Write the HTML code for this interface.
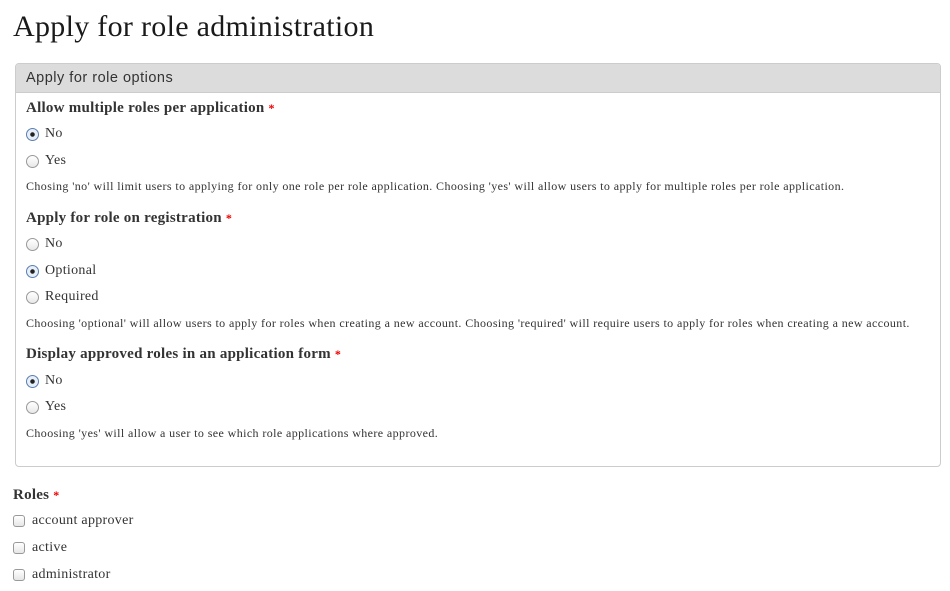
<!DOCTYPE html>
<html><head><style>
body{margin:0;width:950px;height:591px;background:#fff;font-family:"Liberation Serif",serif;color:#3b3b3b;position:relative;overflow:hidden}
.a{position:absolute;white-space:nowrap;line-height:1}
h1{position:absolute;left:13px;top:11px;margin:0;font-weight:normal;font-size:30px;letter-spacing:0.3px;color:#1a1a1a;line-height:32px}
.fs{position:absolute;left:15px;top:63px;width:924px;height:402px;border:1px solid #ccc;border-radius:4px;overflow:hidden}
.lg{position:absolute;left:0;top:0;right:0;height:28px;background:#dcdcdc;border-bottom:1px solid #ccc;font-family:"Liberation Sans",sans-serif;font-size:14.5px;letter-spacing:0.5px;color:#333;line-height:28px;padding-left:10px}
.lb{font-weight:bold;font-size:15px;letter-spacing:0.25px;color:#333}
.lb i{color:#e00;font-style:normal;font-size:12px}
.op{font-size:14px;letter-spacing:0.3px;color:#333}
.d{font-size:12px;letter-spacing:0.4px;color:#333}
.r{position:absolute;width:11px;height:11px;border:1px solid #999;border-radius:50%;background:linear-gradient(#fff,#e8e8e8)}
.r.on{border-color:#5a7fb0;background:radial-gradient(circle,#222 0 2px,#e6eef8 2.5px)}
.c{position:absolute;width:10px;height:10px;border:1px solid #999;border-radius:3px;background:linear-gradient(#fff,#e6e6e6)}
</style></head><body>
<h1>Apply for role administration</h1>
<div class="fs"><div class="lg">Apply for role options</div></div>
<div class="a lb" style="left:26px;top:101px">Allow multiple roles per application <i>*</i></div>
<div class="r on" style="left:26px;top:128px"></div><div class="a op" style="left:45px;top:127px">No</div>
<div class="r" style="left:26px;top:155px"></div><div class="a op" style="left:45px;top:154px">Yes</div>
<div class="a d" style="left:26px;top:180px">Chosing 'no' will limit users to applying for only one role per role application. Choosing 'yes' will allow users to apply for multiple roles per role application.</div>
<div class="a lb" style="left:26px;top:211px">Apply for role on registration <i>*</i></div>
<div class="r" style="left:26px;top:238px"></div><div class="a op" style="left:45px;top:237px">No</div>
<div class="r on" style="left:26px;top:265px"></div><div class="a op" style="left:45px;top:264px">Optional</div>
<div class="r" style="left:26px;top:291px"></div><div class="a op" style="left:45px;top:290px">Required</div>
<div class="a d" style="left:26px;top:317px">Choosing 'optional' will allow users to apply for roles when creating a new account. Choosing 'required' will require users to apply for roles when creating a new account.</div>
<div class="a lb" style="left:26px;top:347px">Display approved roles in an application form <i>*</i></div>
<div class="r on" style="left:26px;top:375px"></div><div class="a op" style="left:45px;top:374px">No</div>
<div class="r" style="left:26px;top:401px"></div><div class="a op" style="left:45px;top:400px">Yes</div>
<div class="a d" style="left:26px;top:427px">Choosing 'yes' will allow a user to see which role applications where approved.</div>
<div class="a lb" style="left:13px;top:488px">Roles <i>*</i></div>
<div class="c" style="left:13px;top:515px"></div><div class="a op" style="left:32px;top:514px">account approver</div>
<div class="c" style="left:13px;top:542px"></div><div class="a op" style="left:32px;top:541px">active</div>
<div class="c" style="left:13px;top:569px"></div><div class="a op" style="left:32px;top:568px">administrator</div>
</body></html>
